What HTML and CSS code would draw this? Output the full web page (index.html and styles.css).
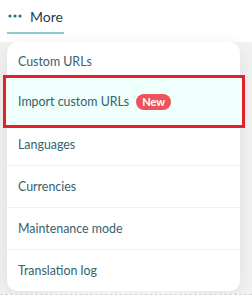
FILE: index.html
```html
<!DOCTYPE html>
<html lang="en">
<head>
  <title>More menu</title>
  <meta charset="utf-8">
  <meta name="viewport" content="width=device-width, initial-scale=1">
  <link rel="stylesheet" href="styles.css">
</head>
<body>
  <nav class="tabs">
    <span class="tab tab-active">
      <svg class="tab-icon" width="14" height="4" viewBox="0 0 14 4">
        <circle cx="2" cy="2" r="1.6" fill="#2f6f86"/>
        <circle cx="7" cy="2" r="1.6" fill="#2f6f86"/>
        <circle cx="12" cy="2" r="1.6" fill="#2f6f86"/>
      </svg>
      More
    </span>
  </nav>

  <div class="stage">
    <ul class="menu">
      <li class="menu-item">Custom URLs</li>
      <li class="menu-item menu-item-marked">Import custom URLs <span class="badge">New</span></li>
      <li class="menu-item">Languages</li>
      <li class="menu-item">Currencies</li>
      <li class="menu-item">Maintenance mode</li>
      <li class="menu-item">Translation log</li>
    </ul>
    <div class="divider"></div>
  </div>
</body>
</html>
```

FILE: styles.css
```css
*, *::before, *::after {
  margin: 0;
  padding: 0;
  box-sizing: border-box;
}

body {
  background-color: #ffffff;
  color: #35626b;
  font-family: "Lato", "Noto Sans", sans-serif;
  font-size: 12.4px;
}

.tabs {
  display: flex;
  height: 42px;
  padding: 0 0 0 7px;
}

.tab {
  display: flex;
  align-items: center;
  gap: 8px;
  height: 34px;
  padding: 0 1px 0 1px;
  color: #213f4f;
  font-size: 14px;
}

.tab-active {
  border-bottom: 2px solid #8ec9ce;
}

.stage {
  padding: 0 12px 0 7px;
  background: linear-gradient(90deg, #f1f1f1 0, #ffffff 30%, #ffffff 70%, #f1f1f1 100%);
}

.menu {
  list-style: none;
  background-color: #ffffff;
  border-radius: 10px;
  box-shadow: 0 4px 18px rgba(0, 0, 0, 0.09);
}

.menu-item {
  display: flex;
  align-items: center;
  gap: 7px;
  height: 42px;
  padding-left: 11px;
  border-top: 1px solid #f0f0f0;
}

.menu-item:first-child {
  height: 38px;
  border-top: none;
}

.menu-item-marked {
  height: 53px;
  margin: -5px -5px -5px -4px;
  padding-left: 12px;
  border: 3px solid #e5202a;
  background-color: #effffb;
  position: relative;
}

.menu-item-marked + .menu-item {
  border-top: none;
}

.badge {
  display: inline-block;
  padding: 1px 6px;
  border-radius: 9px;
  background-color: #f0525b;
  color: #ffffff;
  font-size: 11px;
  font-weight: 700;
  line-height: 14px;
}

.divider {
  height: 16px;
  margin-left: -7px;
  margin-right: -12px;
  border-top: 1px dashed #d4d4d4;
  margin-top: 3px;
  background-color: #ffffff;
}
```
